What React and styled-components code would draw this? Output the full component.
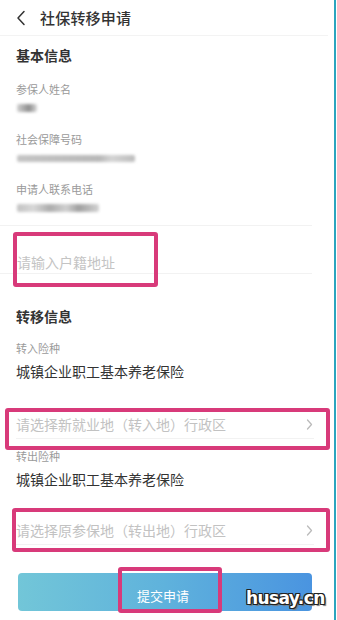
import React from "react";
import styled, { createGlobalStyle } from "styled-components";

const Global = createGlobalStyle`
  html, body { margin: 0; padding: 0; background: #fff; }
  body { font-family: "Noto Sans CJK SC", "Noto Sans", sans-serif; }
  * { box-sizing: border-box; }
`;

const Page = styled.div`
  position: relative;
  width: 336px;
  height: 620px;
  overflow: hidden;
  background: #fff;
  border-right: 2px solid #2ba5bf;
  display: flex;
  flex-direction: column;
`;

const Header = styled.div`
  height: 36px;
  display: flex;
  align-items: center;
  padding-left: 16px;
  border-bottom: 1px solid #f3f3f3;
  margin-right: 6px;
`;

const Title = styled.div`
  margin-left: 14px;
  font-size: 15px;
  color: #333;
  font-weight: 500;
  letter-spacing: 0.2px;
`;

const SectionTitle = styled.div`
  height: 38px;
  margin-top: ${(p) => p.$mt || 0}px;
  display: flex;
  align-items: center;
  padding-left: 16px;
  font-size: 14px;
  font-weight: 700;
  color: #333;
`;

const Fields = styled.div`
  display: flex;
  flex-direction: column;
  gap: 12px;
  padding-top: 6px;
`;

const Field = styled.div`
  display: flex;
  flex-direction: column;
  padding-left: 16px;
  margin-top: ${(p) => p.$mt || 0}px;
`;

const Label = styled.div`
  height: 18px;
  line-height: 18px;
  font-size: 11px;
  color: #9a9a9a;
`;

const Masked = styled.div`
  height: 20px;
  display: flex;
  align-items: center;
  padding-left: 1px;
`;

const Blur = styled.div`
  height: ${(p) => p.$h || 6}px;
  width: ${(p) => p.$w}px;
  background: ${(p) => p.$bg};
  filter: blur(1.8px);
  border-radius: 2px;
`;

const Value = styled.div`
  height: 22px;
  margin-top: 3px;
  line-height: 22px;
  font-size: 14px;
  color: #333;
`;

const Divider = styled.div`
  height: 1px;
  background: #f2f2f2;
  margin-top: ${(p) => p.$mt || 0}px;
  margin-right: 22px;
`;

const InputRow = styled.div`
  height: 47px;
  display: flex;
  align-items: flex-end;
  padding: 0 0 1px 17px;
  font-size: 14px;
  color: #c4c4c4;
  line-height: 20px;
`;

const SelectRow = styled.div`
  height: 29px;
  margin-top: ${(p) => p.$mt || 0}px;
  margin-left: 16px;
  margin-right: 20px;
  padding-right: 1px;
  display: flex;
  align-items: center;
  justify-content: space-between;
  border-bottom: 1px solid #f2f2f2;
  font-size: 14px;
  color: #c2c2c2;
`;

const Button = styled.div`
  margin: 28px 22px 0 18px;
  height: 38px;
  border-radius: 4px;
  background: linear-gradient(90deg, #72c6d8 0%, #5fb2dc 50%, #4a94e0 100%);
  color: #fff;
  font-size: 13px;
  display: flex;
  align-items: center;
  justify-content: center;
  padding-top: 6px;
  padding-right: 4px;
`;

const Highlight = styled.div`
  position: absolute;
  left: ${(p) => p.$x}px;
  top: ${(p) => p.$y}px;
  width: ${(p) => p.$w}px;
  height: ${(p) => p.$h}px;
  border: 4px solid #d83a7a;
  border-radius: 3px;
  pointer-events: none;
`;

const Watermark = styled.div`
  position: absolute;
  left: 246px;
  top: 588px;
  font-family: "DejaVu Sans", sans-serif;
  font-weight: 700;
  font-size: 17px;
  color: #fff;
  letter-spacing: -0.6px;
  text-shadow:
    -1px -1px 0 #222, 1px -1px 0 #222, -1px 1px 0 #222, 1px 1px 0 #222,
    0 -1px 0 #222, 0 1px 0 #222, -1px 0 0 #222, 1px 0 0 #222,
    2px 2px 1px #777;
`;

const BackIcon = () => (
  <svg width="10" height="16" viewBox="0 0 10 16">
    <path d="M8 1.5 L2 8 L8 14.5" fill="none" stroke="#333" strokeWidth="1.5" strokeLinecap="round" strokeLinejoin="round" />
  </svg>
);

const Chevron = () => (
  <svg width="7" height="11" viewBox="0 0 7 11">
    <path d="M1.5 1 L5.5 5.5 L1.5 10" fill="none" stroke="#bbb" strokeWidth="1.3" strokeLinecap="round" strokeLinejoin="round" />
  </svg>
);

export default function App() {
  return (
    <>
      <Global />
      <Page>
        <Header>
          <BackIcon />
          <Title>社保转移申请</Title>
        </Header>
        <SectionTitle>基本信息</SectionTitle>
        <Fields>
          <Field>
            <Label>参保人姓名</Label>
            <Masked>
              <Blur $w={20} $h={8} $bg="linear-gradient(90deg,#cfcfcf,#8e8e8e 60%,#d8d8d8)" />
            </Masked>
          </Field>
          <Field>
            <Label>社会保障号码</Label>
            <Masked>
              <Blur $w={118} $h={7} $bg="linear-gradient(90deg,#c4c4c4,#b8b8b8 70%,#d4d4d4 80%,#bcbcbc)" />
            </Masked>
          </Field>
          <Field>
            <Label>申请人联系电话</Label>
            <Masked>
              <Blur $w={82} $h={8} $bg="linear-gradient(90deg,#c2c2c2,#d8d8d8 20%,#acacac 40%,#d0d0d0 60%,#a0a0a0 75%,#d2d2d2)" />
            </Masked>
          </Field>
        </Fields>
        <Divider $mt={7} />
        <InputRow>请输入户籍地址</InputRow>
        <Divider />
        <SectionTitle $mt={23}>转移信息</SectionTitle>
        <Field $mt={4}>
          <Label>转入险种</Label>
          <Value>城镇企业职工基本养老保险</Value>
        </Field>
        <SelectRow $mt={28}>
          请选择新就业地（转入地）行政区
          <Chevron />
        </SelectRow>
        <Field $mt={8}>
          <Label>转出险种</Label>
          <Value>城镇企业职工基本养老保险</Value>
        </Field>
        <SelectRow $mt={26}>
          请选择原参保地（转出地）行政区
          <Chevron />
        </SelectRow>
        <Button>提交申请</Button>

        <Highlight $x={13} $y={232} $w={145} $h={55} />
        <Highlight $x={5} $y={408} $w={325} $h={42} />
        <Highlight $x={12} $y={508} $w={318} $h={44} />
        <Highlight $x={118} $y={567} $w={104} $h={46} />
        <Watermark>husay.cn</Watermark>
      </Page>
    </>
  );
}
